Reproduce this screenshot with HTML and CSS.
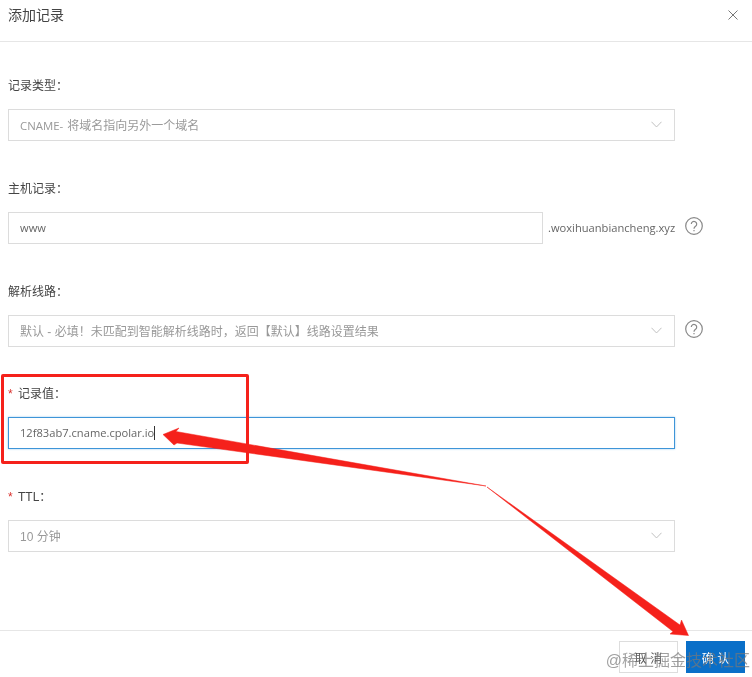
FILE: index.html
```html
<!DOCTYPE html>
<html lang="zh">
<head>
<meta charset="utf-8">
<title>添加记录</title>
<link rel="stylesheet" href="styles.css">
</head>
<body>
<div class="dialog">
  <header class="head">
    <h1 class="title">添加记录</h1>
    <svg class="close" viewBox="0 0 10 10"><path d="M.5.5l9 9M9.5.5l-9 9"/></svg>
  </header>
  <form class="form">
    <div class="field">
      <div class="label">记录类型：</div>
      <div class="row">
        <div class="control select"><span class="muted"><span class="latin">CNAME- </span>将域名指向另外一个域名</span><svg class="chev" viewBox="0 0 12 7"><path d="M.5.5L6 6.2 11.500.5"/></svg></div>
      </div>
    </div>
    <div class="field">
      <div class="label">主机记录：</div>
      <div class="row">
        <div class="control grow"><span class="value">www</span></div>
        <span class="suffix">.woxihuanbiancheng.xyz</span>
        <svg class="help" viewBox="0 0 18 18"><circle cx="9" cy="9" r="8.300"/><path d="M6.300 7.100a2.700 2.700 0 1 1 4.300 2.200c-1 .7-1.600 1.100-1.600 2.400M9 13v1.300"/></svg>
      </div>
    </div>
    <div class="field">
      <div class="label">解析线路：</div>
      <div class="row">
        <div class="control select"><span class="muted">默认 - 必填！未匹配到智能解析线路时，返回【默认】线路设置结果</span><svg class="chev" viewBox="0 0 12 7"><path d="M.5.5L6 6.2 11.500.5"/></svg></div>
        <svg class="help" viewBox="0 0 18 18"><circle cx="9" cy="9" r="8.300"/><path d="M6.300 7.100a2.700 2.700 0 1 1 4.300 2.200c-1 .7-1.600 1.100-1.600 2.400M9 13v1.300"/></svg>
      </div>
    </div>
    <div class="field">
      <div class="label"><span class="star">*</span>记录值：</div>
      <div class="row">
        <div class="control focus"><span class="value">12f83ab7.cname.cpolar.io</span><i class="caret"></i></div>
      </div>
    </div>
    <div class="field">
      <div class="label"><span class="star">*</span>TTL：</div>
      <div class="row">
        <div class="control select"><span class="muted">10 分钟</span><svg class="chev" viewBox="0 0 12 7"><path d="M.5.5L6 6.2 11.500.5"/></svg></div>
      </div>
    </div>
  </form>
  <footer class="foot">
    <button class="btn" type="button">取 消</button>
    <button class="btn primary" type="button">确 认</button>
  </footer>
  <div class="redbox"></div>
  <svg class="arrows" viewBox="0 0 752 677">
    <path d="M163 434.500L179 428 176 431.500 486 486 177 443 174 445Z"/>
    <path d="M487 487L680 625 681.500 620 688.500 635.500 670 634 673 631.500Z"/>
  </svg>
  <div class="mark">@稀土掘金技术社区</div>
</div>
</body>
</html>
```
FILE: styles.css
```css
* { box-sizing: border-box; }
html, body { margin: 0; padding: 0; background: #fff; }
body {
  font-family: "Liberation Sans", "Noto Sans CJK SC", sans-serif;
  font-size: 12px;
  color: #555;
}
.dialog {
  position: relative;
  display: flex;
  flex-direction: column;
  width: 752px;
  height: 677px;
  overflow: hidden;
  filter: blur(.35px);
}
.head {
  display: flex;
  justify-content: space-between;
  align-items: flex-start;
  height: 42px;
  padding: 5px 14px 0 8px;
  border-bottom: 1px solid #e6e6e6;
}
.title {
  margin: 0;
  font-size: 14px;
  font-weight: 400;
  line-height: 20px;
  color: #444;
}
.close {
  width: 10px;
  height: 10px;
  margin-top: 5px;
  fill: none;
  stroke: #777;
  stroke-width: 1;
}
.form {
  display: flex;
  flex-direction: column;
  gap: 36.750px;
  padding: 33px 0 0 8px;
}
.label {
  height: 21px;
  margin-bottom: 13px;
  line-height: 22px;
  color: #444;
}
.star {
  display: inline-block;
  width: 10px;
  color: #d9302c;
}
.row {
  display: flex;
  align-items: center;
  width: 695px;
}
.control {
  display: flex;
  align-items: center;
  justify-content: space-between;
  flex: 0 0 667px;
  height: 32px;
  padding: 0 11px 1px;
  border: 1px solid #dcdcdc;
  background: #fff;
}
.control.grow { flex: 0 0 535px; }
.control.focus {
  justify-content: flex-start;
  border-color: #3e95d8;
  box-shadow: 0 0 2px #9ccbee;
}
.latin {
  display: inline-block;
  margin-right: 4px;
  font-family: "Open Sans", "Liberation Sans", sans-serif;
  font-size: 11.400px;
}
.muted { color: #999; }
.value {
  font-family: "Open Sans", "Liberation Sans", sans-serif;
  font-size: 11.150px;
  color: #666;
}
.caret {
  width: 1px;
  height: 14px;
  background: #333;
}
.chev {
  width: 11px;
  height: 7px;
  margin-right: 1px;
  fill: none;
  stroke: #bbb;
  stroke-width: 1;
}
.suffix {
  flex: 0 0 132px;
  min-width: 0;
  padding-left: 5px;
  white-space: nowrap;
  font-family: "Open Sans", "Liberation Sans", sans-serif;
  font-size: 11.150px;
  color: #666;
}
.help {
  flex: none;
  width: 18px;
  height: 18px;
  margin: -4px 0 0 10px;
  fill: none;
  stroke: #888;
  stroke-width: 1.200;
}
.foot {
  display: flex;
  justify-content: flex-end;
  gap: 8px;
  margin-top: auto;
  height: 47px;
  padding: 10px 7px 0 0;
  border-top: 1px solid #e6e6e6;
}
.btn {
  width: 59px;
  height: 32px;
  padding: 0;
  border: 1px solid #ddd;
  background: #fff;
  color: #555;
  font: inherit;
}
.btn.primary {
  border-color: #0a6fc8;
  background: #0a6fc8;
  color: #fff;
}
.redbox {
  position: absolute;
  left: 1px;
  top: 374px;
  width: 248px;
  height: 90px;
  border: 3px solid #f5211b;
  border-radius: 2px;
}
.arrows {
  position: absolute;
  left: 0;
  top: 0;
  width: 752px;
  height: 677px;
  fill: #f5211b;
  stroke: #f5211b;
  stroke-width: .5;
}
.mark {
  position: absolute;
  right: 2px;
  top: 651px;
  font-size: 16px;
  line-height: 20px;
  color: rgba(120, 120, 120, .7);
  white-space: nowrap;
}
```
